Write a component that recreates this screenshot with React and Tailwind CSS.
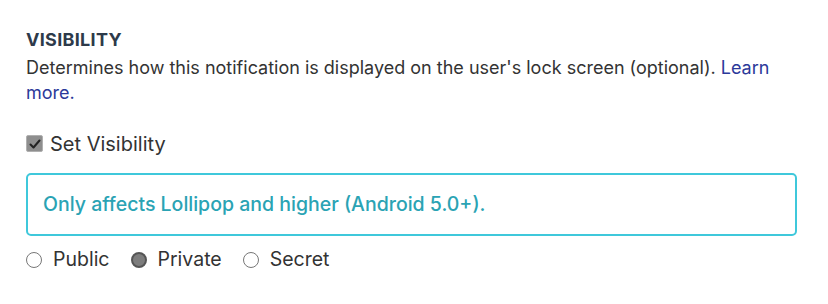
import { useState } from 'react';

function Radio({ label, checked, onChange }) {
  return (
    <label className="flex items-center gap-[11px] cursor-pointer" onClick={onChange}>
      <span
        className={`w-[16px] h-[16px] rounded-full border ${
          checked ? 'bg-[#7d7d7d] border-[#555] border-2' : 'bg-white border-[#777]'
        }`}
      />
      <span>{label}</span>
    </label>
  );
}

export default function App() {
  const [visible, setVisible] = useState(true);
  const [mode, setMode] = useState('private');

  return (
    <div className="w-[828px] h-[304px] bg-white pl-[26px] pr-[31px] pt-[29px] font-['Inter',sans-serif] text-[#333] text-[18px]">
      <h3 className="text-[18px] font-bold text-[#2d3a4a] leading-[22px] tracking-[0.3px]">VISIBILITY</h3>
      <p className="leading-[25px] mt-[4px]">
        Determines how this notification is displayed on the user's lock screen (optional).{' '}
        <a href="#" className="text-[#2b399a]">Learn more.</a>
      </p>

      <label className="mt-[26px] h-[25px] flex items-center gap-[7px] cursor-pointer text-[20px]" onClick={() => setVisible(!visible)}>
        <span className="w-[17px] h-[17px] bg-[#8e8e8e] border border-[#b0b0b0] rounded-[2px] flex items-center justify-center">
          {visible && (
            <svg width="12" height="12" viewBox="0 0 12 12" fill="none">
              <path d="M1.5 6.5 L4.5 9.5 L10.5 2.5" stroke="#222" strokeWidth="2" strokeLinecap="round" strokeLinejoin="round" />
            </svg>
          )}
        </span>
        <span>Set Visibility</span>
      </label>

      <div className="mt-[17px] border-2 border-[#3fc8db] rounded-[5px] h-[63px] flex items-center px-[15px]">
        <p className="text-[#2aa3b4] text-[19.5px] font-medium">Only affects Lollipop and higher (Android 5.0+).</p>
      </div>

      <div className="mt-[11px] h-[25px] flex items-center gap-[21px] text-[19.5px]">
        <Radio label="Public" checked={mode === 'public'} onChange={() => setMode('public')} />
        <Radio label="Private" checked={mode === 'private'} onChange={() => setMode('private')} />
        <Radio label="Secret" checked={mode === 'secret'} onChange={() => setMode('secret')} />
      </div>
    </div>
  );
}
